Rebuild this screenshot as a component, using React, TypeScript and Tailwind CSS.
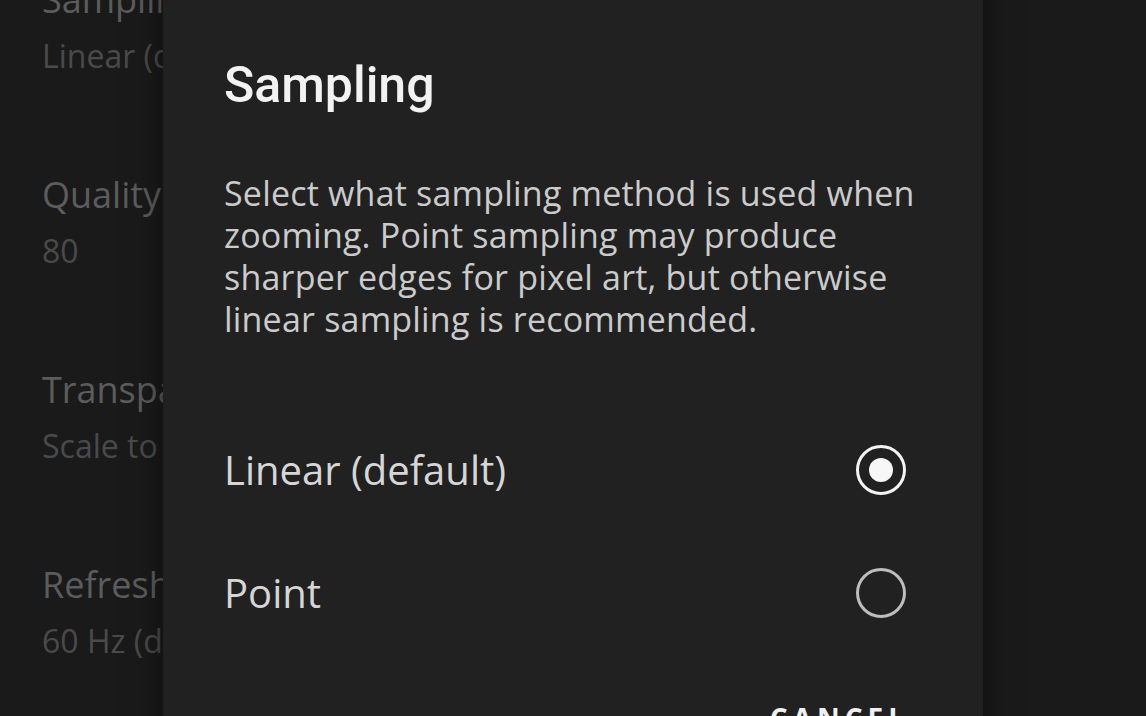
import React from "react";

const items = [
  { t: "Sampling", s: "Linear (default)" },
  { t: "Quality", s: "80" },
  { t: "Transparency", s: "Scale to fit" },
  { t: "Refresh rate", s: "60 Hz (default)" },
];

const lines = [
  "Select what sampling method is used when",
  "zooming. Point sampling may produce",
  "sharper edges for pixel art, but otherwise",
  "linear sampling is recommended.",
];

function Radio({ checked }: { checked: boolean }) {
  return (
    <div
      className={
        "w-[50px] h-[50px] rounded-full flex items-center justify-center border-[3px] " +
        (checked ? "border-[#f4f4f4]" : "border-[#bdbdbd]")
      }
    >
      {checked && <div className="w-[24px] h-[24px] rounded-full bg-[#f7f7f7]" />}
    </div>
  );
}

export default function App() {
  return (
    <div
      className="relative w-[1146px] h-[716px] overflow-hidden bg-[#1a1a1a]"
      style={{ fontFamily: '"Open Sans", "Noto Sans", sans-serif' }}
    >
      <div className="flex flex-col pl-[42px] mt-[-20px]">
        {items.map((it) => (
          <div key={it.t} className="flex flex-col h-[195px]">
            <div className="text-[36px] leading-[40px] text-[#5c5c5c] whitespace-nowrap">{it.t}</div>
            <div className="text-[32px] leading-[40px] mt-[16px] text-[#4a4a4a] whitespace-nowrap">{it.s}</div>
          </div>
        ))}
      </div>

      <div className="absolute left-[163px] top-[-40px] w-[820px] h-[800px] bg-[#212121] shadow-[0_0_30px_rgba(0,0,0,0.5)] flex flex-col pl-[61px] pr-[30px] pt-[99px]">
        <div
          className="text-[50px] leading-[52px] font-medium text-[#f2f2f2]"
          style={{ fontFamily: "Roboto, sans-serif" }}
        >
          Sampling
        </div>
        <p className="mt-[61px] text-[34px] leading-[42px] text-[#cbcbcb] tracking-[0.2px] whitespace-nowrap">
          {lines.map((l, i) => (
            <React.Fragment key={i}>
              {l}
              {i < lines.length - 1 && <br />}
            </React.Fragment>
          ))}
        </p>
        <div className="mt-[68px] flex flex-col pr-[47px]">
          <div className="flex items-center justify-between h-[123px]">
            <span className="text-[40px] text-[#d6d6d6]">Linear (default)</span>
            <Radio checked />
          </div>
          <div className="flex items-center justify-between h-[123px]">
            <span className="text-[40px] text-[#d6d6d6]">Point</span>
            <Radio checked={false} />
          </div>
        </div>
        <div className="flex justify-end mt-[45px] pr-[44px]">
          <span className="text-[28px] leading-[38px] font-bold tracking-[5px] text-[#f0f0f0]">CANCEL</span>
        </div>
      </div>
    </div>
  );
}
